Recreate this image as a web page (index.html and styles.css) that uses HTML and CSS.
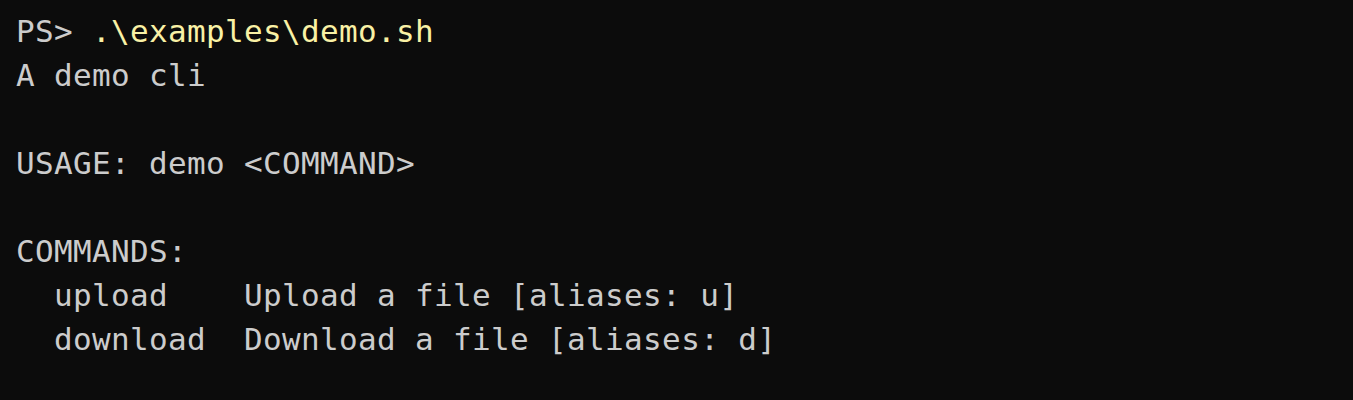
FILE: index.html
```html
<!DOCTYPE html>
<html>
<head>
<meta charset="utf-8">
<link rel="stylesheet" href="styles.css">
</head>
<body>
<main class="terminal">
<pre class="output"><span class="prompt">PS&gt; </span><span class="cmd">.\examples\demo.sh</span>
A demo cli

USAGE: demo &lt;COMMAND&gt;

COMMANDS:
  upload    Upload a file [aliases: u]
  download  Download a file [aliases: d]
</pre>
</main>
</body>
</html>
```

FILE: styles.css
```css
html, body {
  margin: 0;
  padding: 0;
  background: #0c0c0c;
  height: 100%;
}
.terminal {
  padding: 9px 16px;
  background: #0c0c0c;
  min-height: 100%;
  box-sizing: border-box;
}
.output {
  margin: 0;
  font-family: "DejaVu Sans Mono", monospace;
  font-size: 31px;
  letter-spacing: 0.34px;
  line-height: 44px;
  color: #cccccc;
}
.cmd {
  color: #f9f1a5;
}
```
